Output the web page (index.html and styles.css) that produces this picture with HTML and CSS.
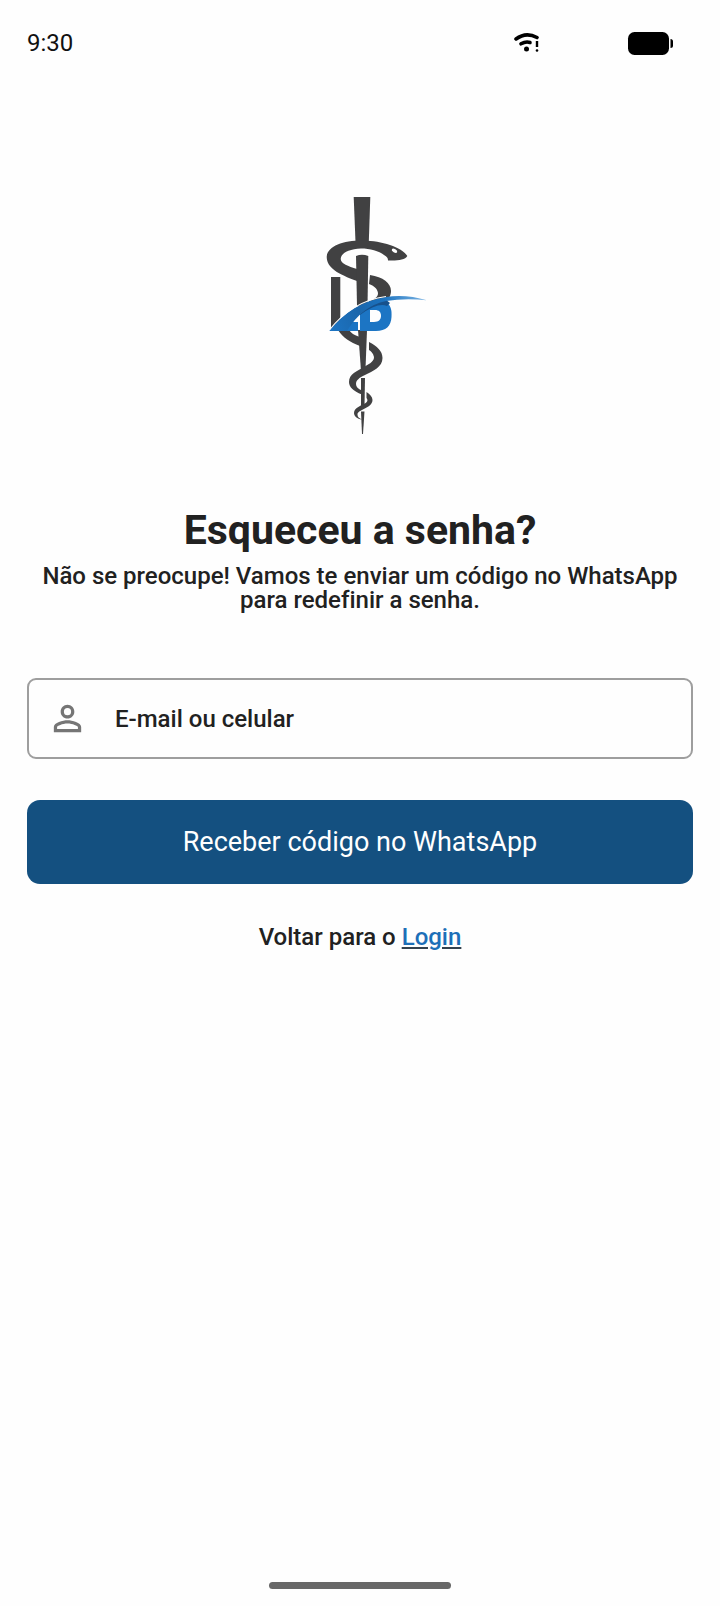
FILE: index.html
```html
<!DOCTYPE html>
<html lang="pt-BR">
<head>
<meta charset="utf-8">
<meta name="viewport" content="width=device-width, initial-scale=1">
<title>Esqueceu a senha?</title>
<link rel="stylesheet" href="styles.css">
</head>
<body>
<div class="screen">
  <header class="status">
    <time class="status-time">9:30</time>
    <div class="status-icons">
      <svg class="wifi" viewBox="0 0 26 20" aria-hidden="true">
        <path d="M2 6Q12 -1.500 23 4.500" fill="none" stroke="#000" stroke-width="3.600" stroke-linecap="round"/>
        <path d="M7 10.800Q12 8 16 9.500" fill="none" stroke="#000" stroke-width="3.600" stroke-linecap="round"/>
        <circle cx="12.500" cy="16" r="2.500"/>
        <path d="M23 8V14" stroke="#000" stroke-width="2.400"/>
        <circle cx="23" cy="17.500" r="1.300"/>
      </svg>
      <svg class="battery" viewBox="0 0 46 23" aria-hidden="true">
        <rect x="1" width="41" height="23" rx="6.500"/>
        <path d="M43.500 7q2.500 0 2.500 2.500v4q0 2.500-2.500 2.500z"/>
      </svg>
    </div>
  </header>

  <main class="content">
    <svg class="logo" viewBox="320 196 110 240" role="img" aria-label="LB">
      <defs>
        <linearGradient id="swoosh" x1="330" y1="330" x2="427" y2="298" gradientUnits="userSpaceOnUse">
          <stop offset="0" stop-color="#1d75c4"/>
          <stop offset=".32" stop-color="#1b66ab"/>
          <stop offset=".6" stop-color="#1c73c0"/>
          <stop offset="1" stop-color="#7fb6e4"/>
        </linearGradient>
      </defs>
      <g fill="#414142">
        <path d="M353.700 197H370.300L368.800 242H355.500Z"/>
        <path d="M357 281C338 274 327 268 326.700 257C327 246 344 240 364 240.500C381 241 402 247 407.300 256C405 260 397 261 388 260.500C388 258 387 257 384 255C379 251 370 248.500 361 248.500C349 249 341 253 340.700 259C341 264 348 266 357 269Z"/>
        <path d="M356 256Q362 253.500 368.300 256L367.500 306H357Z"/>
        <path d="M358 330H367L365.500 369L361 371Z"/>
        <path d="M331 277H340.300V321L331 330Z"/>
        <path d="M370 275C383 277 391 283 391 291C391 296 388 300 385 303L369 309V301C375 299 378 297 378 293C377 288 374 286 369 284Z"/>
        <path d="M338 330H349C351 333 354 335 360 337V346C350 342 343 338 338 330Z"/>
        <path d="M369 342C377 346 382.500 351 382.500 358C382.500 367 373 371 365 375C359 378 356 380 356 384C356 387 358 389 362 390.500V394.500C353 391 349 387 349 382C349 374 357 371 364 367C371 363 374 361 374 357C373 353 371 351 369 350Z"/>
        <path d="M361 378H365L364.500 406L361 408Z"/>
        <path d="M366.500 392C370 394 372.500 397 372.500 400C372.500 405 367 407.500 362 410C358 412 357.500 413 357.500 414.500C357.500 417 359 418 362 419.500C357 419 354 416 354 413C354 408 360 406 364 404C368 402 368 400 366.500 398Z"/>
        <path d="M361 411.500H364.500L363 434H362Z"/>
      </g>
      <path fill="#1c75c4" fill-rule="evenodd" d="M360 312L369 303L385 301C391 305 392 310 391.500 317C391 326 386 331 376 331H360ZM370 310V322H374C379 322 381 319 381 316C381 312 379 310 375 310Z"/>
      <path d="M367 303L385 299L390 303L387 306Q378 302 360 315V309Z" fill="#17518c"/>
      <path d="M347 322H358V331H347Z" fill="#1c75c4"/>
      <path d="M329 331Q352 302 386 297Q406 294 427 300.300Q405 298 386 301Q362 306 347 331Z" fill="url(#swoosh)"/>
      <path d="M329 330.500Q352 301 386 296.500" fill="none" stroke="#fefefe" stroke-width="1.200"/>
      <ellipse cx="394.500" cy="250.700" rx="3" ry="1.700" transform="rotate(30 394.500 250.700)" fill="#fff"/>
    </svg>

    <h1 class="title">Esqueceu a senha?</h1>
    <p class="lead">Não se preocupe! Vamos te enviar um código no WhatsApp para redefinir a senha.</p>

    <form class="form">
      <div class="field">
        <svg class="field-icon" viewBox="0 0 24 24" aria-hidden="true">
          <path fill="#757575" d="M12 5.900a2.100 2.100 0 1 1 0 4.200 2.100 2.100 0 0 1 0-4.200m0 9c2.970 0 6.100 1.460 6.100 2.100v1.100H5.900V17c0-.640 3.130-2.100 6.100-2.100M12 4C9.790 4 8 5.790 8 8s1.790 4 4 4 4-1.790 4-4-1.790-4-4-4m0 9c-2.670 0-8 1.340-8 4v3h16v-3c0-2.660-5.330-4-8-4"/>
        </svg>
        <input class="field-input" type="text" placeholder="E-mail ou celular" aria-label="E-mail ou celular">
      </div>
      <button class="submit" type="button">Receber código no WhatsApp</button>
    </form>
    <p class="back">Voltar para o <a class="link" href="#login">Login</a></p>
  </main>
  <div class="home-bar"></div>
</div>
</body>
</html>
```
FILE: styles.css
```css
* {
  box-sizing: border-box;
}

body {
  margin: 0;
  background: #fefefe;
  color: #212121;
  font-family: Roboto, "Liberation Sans", sans-serif;
  font-size: 24px;
  font-variant-ligatures: none;
  line-height: 24px;
}

.screen {
  display: flex;
  flex-direction: column;
  min-height: 100vh;
  padding: 31px 27px 17px;
}

.status {
  display: flex;
  justify-content: space-between;
  align-items: center;
  padding-right: 20px;
  color: #111;
}

.status-icons {
  display: flex;
  align-items: center;
  gap: 87px;
}

.wifi {
  width: 26px;
  height: 20px;
}

.battery {
  width: 46px;
  height: 23px;
}

.content {
  display: flex;
  flex: 1;
  flex-direction: column;
  padding-top: 141px;
}

.logo {
  align-self: center;
  width: 110px;
  height: 240px;
  margin-left: 30px;
}

.title {
  margin: 70px 0 0;
  font-size: 41px;
  font-weight: 700;
  line-height: 48px;
  text-align: center;
}

.lead {
  margin: 10px 0 0;
  font-weight: 500;
  text-align: center;
}

.form {
  display: flex;
  flex-direction: column;
  gap: 41px;
  margin-top: 66px;
}

.field {
  display: flex;
  align-items: center;
  gap: 27px;
  height: 81px;
  padding: 0 18px;
  border: 2px solid #9e9e9e;
  border-radius: 9px;
}

.field:focus-within {
  border-color: #145080;
}

.field-icon {
  flex: none;
  width: 41px;
  height: 41px;
}

.field-input {
  flex: 1;
  min-width: 0;
  padding: 0;
  border: 0;
  outline: 0;
  background: none;
  color: #212121;
  font: inherit;
  font-weight: 500;
}

.field-input::placeholder {
  color: #212121;
  opacity: 1;
}

.submit {
  height: 84px;
  border: 0;
  border-radius: 13px;
  background: #145080;
  color: #fff;
  font: inherit;
  font-size: 27px;
}

.back {
  margin: 41px 0 0;
  font-weight: 500;
  text-align: center;
}

.link {
  color: #1c6fb8;
  text-decoration-color: #33424f;
}

.home-bar {
  align-self: center;
  width: 182px;
  height: 7px;
  border-radius: 4px;
  background: #686868;
}
```
